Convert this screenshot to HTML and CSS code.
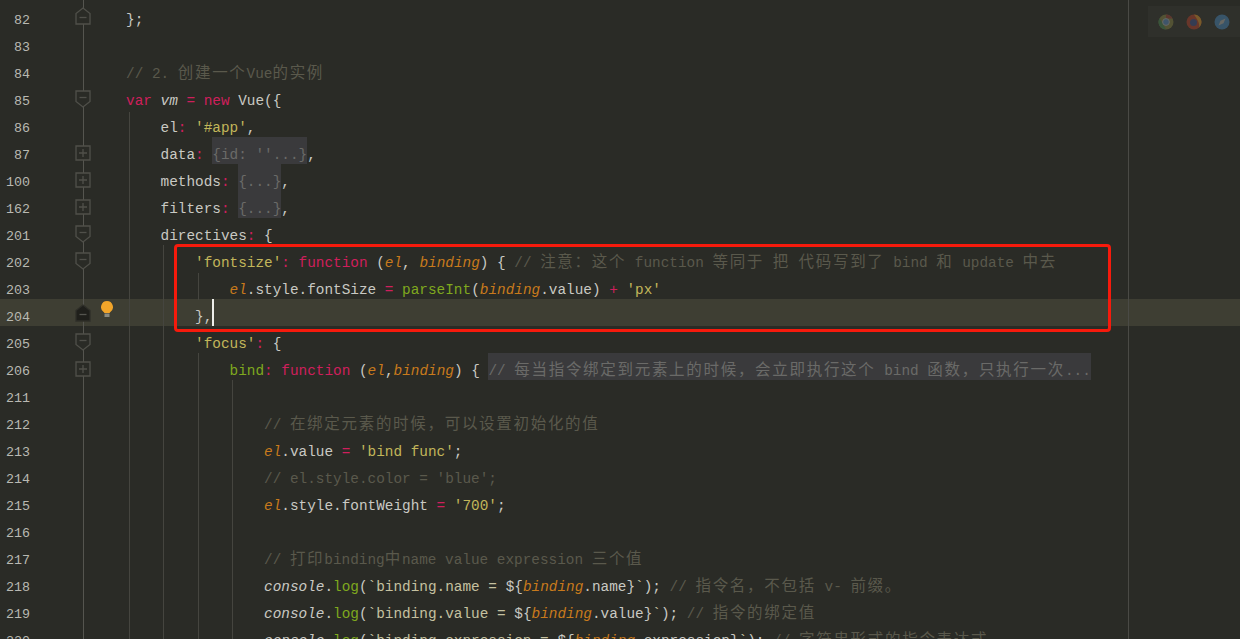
FILE: index.html
```html
<!DOCTYPE html>
<html lang="zh-CN">
<head>
<meta charset="utf-8">
<title>Vue directives</title>
<link rel="stylesheet" href="styles.css">
</head>
<body>
<main class="editor">
  <div class="row"><span class="num">82</span><span class="fold"><svg class="mk up" viewBox="0 0 16 18"><path d="M1 17V6.500L8 1l7 5.500V17z"/><path d="M4.500 10.500h7"/></svg></span><code class="code">};</code></div>
  <div class="row"><span class="num">83</span><span class="fold"></span><code class="code"></code></div>
  <div class="row"><span class="num">84</span><span class="fold"></span><code class="code c">// 2. <span class="h">创建一个</span>Vue<span class="h">的实例</span></code></div>
  <div class="row"><span class="num">85</span><span class="fold"><svg class="mk" viewBox="0 0 16 18"><path d="M1 1v10.500L8 17l7-5.500V1z"/><path d="M4.500 7.500h7"/></svg></span><code class="code"><span class="k">var</span> <i>vm</i> <span class="k">=</span> <span class="k">new</span> Vue({</code></div>
  <div class="row"><span class="num">86</span><span class="fold"></span><code class="code">    el<span class="k">:</span> <span class="s">'#app'</span>,</code></div>
  <div class="row"><span class="num">87</span><span class="fold"><svg class="mk" viewBox="0 0 16 18"><path d="M1 2h14v14H1z"/><path d="M4 9h8M8 5v8"/></svg></span><code class="code">    data<span class="k">:</span> <span class="f">{id: ''...}</span>,</code></div>
  <div class="row"><span class="num">100</span><span class="fold"><svg class="mk" viewBox="0 0 16 18"><path d="M1 2h14v14H1z"/><path d="M4 9h8M8 5v8"/></svg></span><code class="code">    methods<span class="k">:</span> <span class="f">{...}</span>,</code></div>
  <div class="row"><span class="num">162</span><span class="fold"><svg class="mk" viewBox="0 0 16 18"><path d="M1 2h14v14H1z"/><path d="M4 9h8M8 5v8"/></svg></span><code class="code">    filters<span class="k">:</span> <span class="f">{...}</span>,</code></div>
  <div class="row"><span class="num">201</span><span class="fold"><svg class="mk" viewBox="0 0 16 18"><path d="M1 1v10.500L8 17l7-5.500V1z"/><path d="M4.500 7.500h7"/></svg></span><code class="code">    directives<span class="k">:</span> {</code></div>
  <div class="row"><span class="num">202</span><span class="fold"><svg class="mk" viewBox="0 0 16 18"><path d="M1 1v10.500L8 17l7-5.500V1z"/><path d="M4.500 7.500h7"/></svg></span><code class="code">        <span class="s">'fontsize'</span><span class="k">:</span> <span class="k">function</span> (<span class="p">el</span>, <span class="p">binding</span>) { <span class="c">// <span class="h">注意&#xFF1A;这个</span> function <span class="h">等同于</span> <span class="h">把</span> <span class="h">代码写到了</span> bind <span class="h">和</span> update <span class="h">中去</span></span></code></div>
  <div class="row"><span class="num">203</span><span class="fold"></span><code class="code">            <span class="p">el</span>.style.fontSize <span class="k">=</span> <span class="g">parseInt</span>(<span class="p">binding</span>.value) <span class="k">+</span> <span class="s">'px'</span></code></div>
  <div class="row now"><span class="num">204</span><span class="fold"><svg class="mk up solid" viewBox="0 0 16 18"><path d="M1 17V6.500L8 1l7 5.500V17z"/><path class="dash" d="M4.500 10.500h7"/></svg><svg class="bulb" viewBox="0 0 12 16"><path class="glow" d="M6 0a6 6 0 0 0-3.400 10.900c.5.400.7.800.7 1.100h5.400c0-.3.200-.7.700-1.100A6 6 0 0 0 6 0z"/><path class="base" d="M3.500 12.500h5V16h-5z"/></svg></span><code class="code">        },<span class="caret"></span></code></div>
  <div class="row"><span class="num">205</span><span class="fold"><svg class="mk" viewBox="0 0 16 18"><path d="M1 1v10.500L8 17l7-5.500V1z"/><path d="M4.500 7.500h7"/></svg></span><code class="code">        <span class="s">'focus'</span><span class="k">:</span> {</code></div>
  <div class="row"><span class="num">206</span><span class="fold"><svg class="mk" viewBox="0 0 16 18"><path d="M1 2h14v14H1z"/><path d="M4 9h8M8 5v8"/></svg></span><code class="code">            <span class="g">bind</span><span class="k">:</span> <span class="k">function</span> (<span class="p">el</span>,<span class="p">binding</span>) { <span class="f">// <span class="h">每当指令绑定到元素上的时候&#xFF0C;会立即执行这个</span> bind <span class="h">函数&#xFF0C;只执行一次</span>...</span></code></div>
  <div class="row"><span class="num">211</span><span class="fold"></span><code class="code"></code></div>
  <div class="row"><span class="num">212</span><span class="fold"></span><code class="code c">                // <span class="h">在绑定元素的时候&#xFF0C;可以设置初始化的值</span></code></div>
  <div class="row"><span class="num">213</span><span class="fold"></span><code class="code">                <span class="p">el</span>.value <span class="k">=</span> <span class="s">'bind func'</span>;</code></div>
  <div class="row"><span class="num">214</span><span class="fold"></span><code class="code c">                // el.style.color = 'blue';</code></div>
  <div class="row"><span class="num">215</span><span class="fold"></span><code class="code">                <span class="p">el</span>.style.fontWeight <span class="k">=</span> <span class="s">'700'</span>;</code></div>
  <div class="row"><span class="num">216</span><span class="fold"></span><code class="code"></code></div>
  <div class="row"><span class="num">217</span><span class="fold"></span><code class="code c">                // <span class="h">打印</span>binding<span class="h">中</span>name value expression <span class="h">三个值</span></code></div>
  <div class="row"><span class="num">218</span><span class="fold"></span><code class="code">                <i>console</i>.<span class="g">log</span>(<span class="t">`binding.name = </span>${<span class="p">binding</span>.name}<span class="t">`</span>); <span class="c">// <span class="h">指令名&#xFF0C;不包括</span> v- <span class="h">前缀&#x3002;</span></span></code></div>
  <div class="row"><span class="num">219</span><span class="fold"></span><code class="code">                <i>console</i>.<span class="g">log</span>(<span class="t">`binding.value = </span>${<span class="p">binding</span>.value}<span class="t">`</span>); <span class="c">// <span class="h">指令的绑定值</span></span></code></div>
  <div class="row"><span class="num">220</span><span class="fold"></span><code class="code">                <i>console</i>.<span class="g">log</span>(<span class="t">`binding.expression = </span>${<span class="p">binding</span>.expression}<span class="t">`</span>); <span class="c">// <span class="h">字符串形式的指令表达式</span></span></code></div>

  <span class="guide g-fold"></span>
  <span class="guide g-1"></span>
  <span class="guide g-2"></span>
  <span class="guide g-3a"></span>
  <span class="guide g-3b"></span>
  <span class="guide g-4"></span>
  <span class="guide g-margin"></span>
  <div class="browsers">
    <svg viewBox="0 0 16 16" class="br"><circle cx="8" cy="8" r="7.500" fill="#6b6a3a"/><path d="M8 .5A7.500 7.500 0 0 1 14.600 4.500H8z" fill="#7c3a32"/><path d="M1.500 4.200 5 10l3 5.500A7.500 7.500 0 0 1 1.500 4.200z" fill="#3f6d47"/><circle cx="8" cy="8" r="3.400" fill="#4a6f94" stroke="#8d8d88"/></svg>
    <svg viewBox="0 0 16 16" class="br"><circle cx="8" cy="8" r="7.500" fill="#8f3b2a"/><path d="M8 .5c4 0 7.500 3.300 7.500 7.500 0 2-1 4-2.500 5.200C14 9 11 5 8 .5z" fill="#a9772a"/><circle cx="7.500" cy="8.500" r="3.500" fill="#38456d"/></svg>
    <svg viewBox="0 0 16 16" class="br"><circle cx="8" cy="8" r="7.500" fill="#3f6c92"/><path d="m11.500 4.500-5 2.300-2 4.700 5-2.300z" fill="#8d8d88"/></svg>
  </div>
  <div class="redbox"></div>
</main>
</body>
</html>
```
FILE: styles.css
```css
* { box-sizing: border-box; }
html, body { margin: 0; height: 100%; overflow: hidden; background: #2a2b26; }
.editor {
  position: relative;
  height: 639px;
  padding-top: 2px;
  overflow: hidden;
  font-family: "Liberation Mono", "Noto Sans CJK SC", monospace;
  color: #c9c9c3;
}
.row { display: flex; height: 27px; line-height: 37px; font-size: 14.38px; white-space: pre; }
.now { background: #3e3e33; }
.num { width: 30px; flex: none; text-align: right; font-size: 13.33px; color: #b9b9b2; }
.fold { position: relative; width: 96px; flex: none; z-index: 2; }
.mk { position: absolute; left: 45px; top: 7px; width: 16px; height: 18px; fill: #2a2b26; stroke: #50504a; stroke-width: 1.300; }
.mk.up { top: 5px; }
.mk.solid { fill: #1f1f1b; stroke: #2f2f29; }
.mk .dash { stroke: #55554f; }
.bulb { position: absolute; left: 71px; top: 2px; width: 12px; height: 16px; }
.glow { fill: #f2a52a; }
.base { fill: #8a8a80; }
.code { font: inherit; display: block; }
.c { color: #5a594c; }
.k { color: #cf1f5c; }
.s { color: #c2b65a; }
.g { color: #7fa81e; }
.p { color: #c87a1c; font-style: italic; }
.t { color: #c5c1a0; }
i { font-style: italic; }
.f { display: inline-block; height: 27px; background: #3a3a3c; color: #6a6a68; vertical-align: top; }
.h { font-size: 15.5px; letter-spacing: 1.7px; }
.caret { display: inline-block; width: 2px; height: 27px; background: #eeeeea; vertical-align: top; }
.guide { position: absolute; width: 1px; background: #45453f; z-index: 1; }
.g-fold { left: 83px; top: 0; bottom: 0; background: #55554f; }
.g-1 { left: 129px; top: 112px; bottom: 0; }
.g-2 { left: 163px; top: 245px; bottom: 0; }
.g-3a { left: 198px; top: 273px; height: 27px; }
.g-3b { left: 198px; top: 353px; bottom: 0; }
.g-4 { left: 232px; top: 380px; bottom: 0; }
.g-margin { left: 1128px; top: 0; bottom: 0; background: #4a4a45; }
.browsers { position: absolute; left: 1148px; top: 6px; width: 92px; height: 31px; display: flex; gap: 12px; align-items: center; padding-left: 10px; background: #2f302b; z-index: 3; }
.br { width: 16px; height: 16px; flex: none; opacity: .6; }
.redbox { position: absolute; left: 174px; top: 244px; width: 937px; height: 88px; border: 3px solid #f61a0c; border-radius: 4px; z-index: 4; }
```
